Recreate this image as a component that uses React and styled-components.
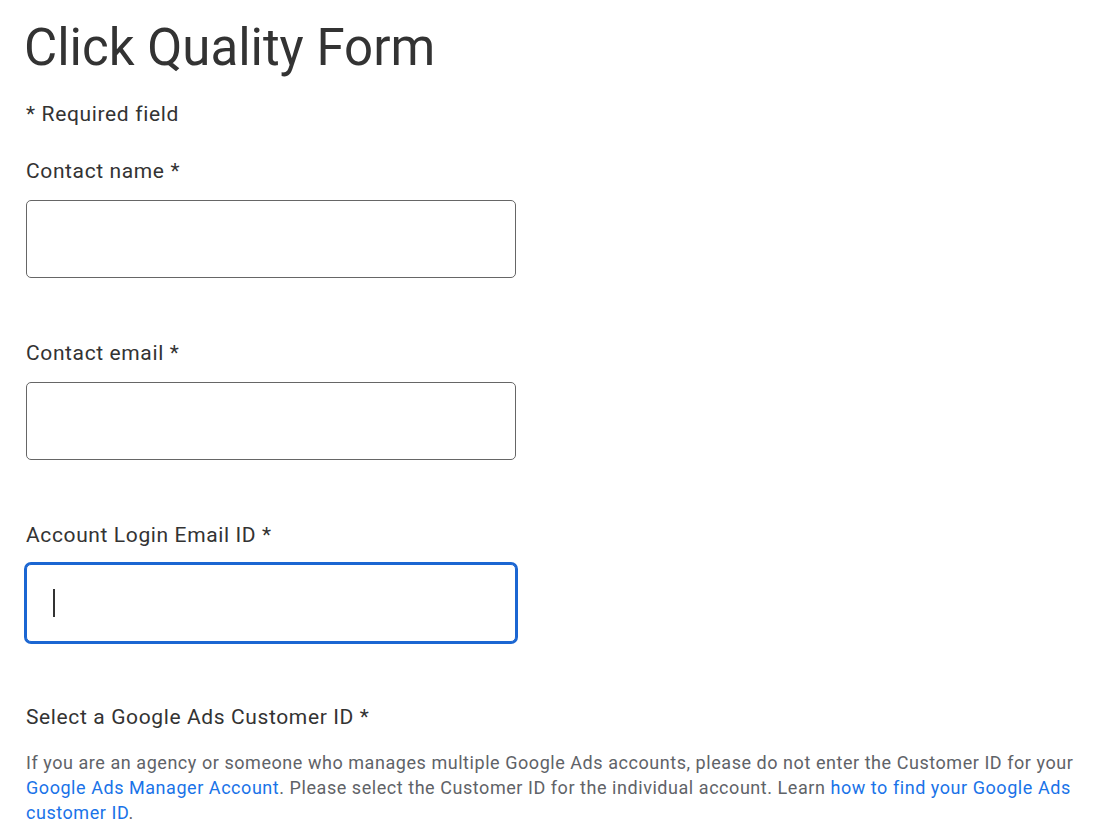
import React from 'react'
import styled, { createGlobalStyle } from 'styled-components'

const GlobalStyle = createGlobalStyle`
	body {
		margin: 0;
		background: #ffffff;
		font-family: Roboto, 'Liberation Sans', Arial, sans-serif;
		color: #333333;
	}
`

const Page = styled.div`
	display: flex;
	flex-direction: column;
	padding: 18px 26px 0 26px;
	width: 1105px;
	box-sizing: border-box;
`

const Title = styled.h1`
	margin: 0 0 24px -2px;
	font-size: 51px;
	line-height: 60px;
	font-weight: 400;
	color: #333333;
`

const Note = styled.div`
	font-size: 21px;
	line-height: 24px;
	letter-spacing: 0.65px;
	margin-bottom: 33px;
`

const Field = styled.div`
	display: flex;
	flex-direction: column;
	gap: 17px;
	margin-bottom: 63px;
`

const Label = styled.label`
	font-size: 21px;
	line-height: 24px;
	letter-spacing: 0.62px;
	color: #333333;
`

const Box = styled.div`
	display: flex;
	align-items: center;
	width: 490px;
	height: 78px;
	box-sizing: border-box;
	padding-left: 26px;
	border: 1px solid ${p => (p.$focused ? '#1b66d2' : '#666666')};
	border-radius: 5px;
	box-shadow: ${p => (p.$focused ? '0 0 0 2px #1b66d2' : 'none')};
	background: #ffffff;
`

const Caret = styled.span`
	display: block;
	width: 1.5px;
	height: 28px;
	background: #333333;
`

const Section = styled.div`
	display: flex;
	flex-direction: column;
	gap: 21px;
`

const Help = styled.p`
	margin: 0;
	width: 1065px;
	font-size: 18px;
	line-height: 25px;
	letter-spacing: 0.55px;
	color: #5f6368;
`

const Link = styled.a`
	color: #1a73e8;
	text-decoration: none;
`

const fields = [
	{ label: 'Contact name *' },
	{ label: 'Contact email *' },
	{ label: 'Account Login Email ID *', focused: true },
]

const App = () => {
	return (
		<Page>
			<GlobalStyle />
			<Title>Click Quality Form</Title>
			<Note>* Required field</Note>

			{fields.map(f => (
				<Field key={f.label}>
					<Label>{f.label}</Label>
					<Box $focused={f.focused}>{f.focused && <Caret />}</Box>
				</Field>
			))}

			<Section>
				<Label>Select a Google Ads Customer ID *</Label>
				<Help>
					If you are an agency or someone who manages multiple Google Ads accounts, please do not enter the
					Customer ID for your <Link href="#">Google Ads Manager Account</Link>. Please select the Customer ID
					for the individual account. Learn <Link href="#">how to find your Google Ads customer ID</Link>.
				</Help>
			</Section>
		</Page>
	)
}

export default App
